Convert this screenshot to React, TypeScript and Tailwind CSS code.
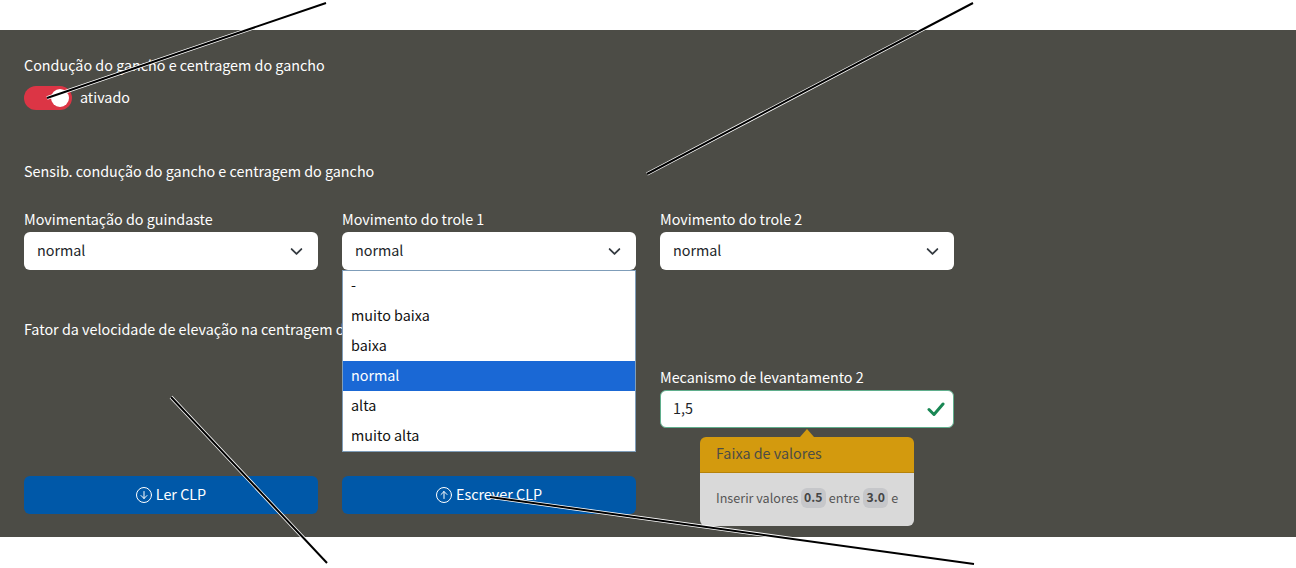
import React from "react";

const font = { fontFamily: '"Noto Sans CJK JP", "Noto Sans", sans-serif' };

function Chevron() {
  return (
    <svg width="13" height="13" viewBox="0 0 16 16" fill="none" stroke="#343a40" strokeWidth="2.2" strokeLinecap="round" strokeLinejoin="round">
      <path d="M2 5l6 6 6-6" />
    </svg>
  );
}

function Field({ label, open }: { label: string; open?: boolean }) {
  return (
    <div className="relative flex flex-col">
      <label className="h-[24px] leading-[22px] text-white">{label}</label>
      <div className="h-[38px] bg-white rounded-md flex items-center justify-between pl-[13px] pr-[15px] text-[#212529]">
        <span className="-mt-[2px]">normal</span>
        <Chevron />
      </div>
      {open && (
        <ul className="absolute top-[62px] left-0 right-0 h-[182px] bg-white border border-[#7f9db9] z-10 text-[#111]">
          {["-", "muito baixa", "baixa", "normal", "alta", "muito alta"].map((o) => (
            <li key={o} className={`h-[30px] leading-[28px] pl-[8px] ${o === "normal" ? "bg-[#1a68d5] text-white" : ""}`}>{o}</li>
          ))}
        </ul>
      )}
    </div>
  );
}

function Arrow({ up }: { up?: boolean }) {
  return (
    <svg width="16" height="16" viewBox="0 0 16 16" fill="none" stroke="white" strokeWidth="1" strokeLinecap="round" strokeLinejoin="round">
      <circle cx="8" cy="8" r="7.5" />
      {up ? <path d="M8 11.5V4.5M5 7.5l3-3 3 3" /> : <path d="M8 4.5v7M5 8.5l3 3 3-3" />}
    </svg>
  );
}

function Line({ x1, y1, x2, y2 }: { x1: number; y1: number; x2: number; y2: number }) {
  return (
    <>
      <line x1={x1} y1={y1} x2={x2} y2={y2} stroke="white" strokeWidth="3.6" />
      <line x1={x1} y1={y1} x2={x2} y2={y2} stroke="black" strokeWidth="2" />
    </>
  );
}

export default function App() {
  return (
    <div className="relative w-[1296px] h-[568px] bg-white overflow-hidden pt-[30px] text-[14.35px]" style={font}>
      <div className="h-[507px] bg-[#4c4c46] px-6 pt-6">
        <div className="h-[24px] leading-[22px] text-white">Condução do gancho e centragem do gancho</div>
        <div className="flex items-center gap-2 h-[24px] mt-[8px] text-white">
          <div className="w-[48px] h-[24px] rounded-full bg-[#dc3545] flex items-center justify-end pr-[3px]">
            <div className="w-[18px] h-[18px] rounded-full bg-white" />
          </div>
          <span className="-mt-[2px]">ativado</span>
        </div>

        <div className="h-[24px] leading-[22px] text-white mt-[50px]">Sensib. condução do gancho e centragem do gancho</div>

        <div className="grid grid-cols-[294px_294px_294px] gap-x-6 mt-[24px]">
          <Field label="Movimentação do guindaste" />
          <Field label="Movimento do trole 1" open />
          <Field label="Movimento do trole 2" />
        </div>

        <div className="h-[24px] leading-[22px] text-white mt-[48px]">Fator da velocidade de elevação na centragem do gancho</div>

        <div className="grid grid-cols-[294px_294px_294px] gap-x-6 mt-[24px]">
          <div className="col-start-3 relative flex flex-col">
            <label className="h-[24px] leading-[22px] text-white">Mecanismo de levantamento 2</label>
            <div className="h-[38px] bg-white rounded-md border border-[#5fae8c] flex items-center justify-between pl-[12px] pr-[8px] text-[#212529]">
              <span className="-mt-[2px]">1,5</span>
              <svg width="18" height="16" viewBox="0 0 18 16" fill="none" stroke="#198754" strokeWidth="3" strokeLinecap="round" strokeLinejoin="round">
                <path d="M2 8.5l5 5L16 3" />
              </svg>
            </div>
            <div className="absolute left-[40px] top-[71px] w-[214px] z-10">
              <div className="absolute -top-[8px] left-[100px] w-0 h-0 border-x-[7px] border-x-transparent border-b-[8px] border-b-[#d39a0e]" />
              <div className="h-[36px] bg-[#d39a0e] rounded-t-md border-b border-[#b5820a] pl-4 leading-[32px] text-[#4c4c46]">Faixa de valores</div>
              <div className="h-[53px] bg-[#d9d9d9] rounded-b-md flex items-center pl-4 pb-[3px] text-[12.6px] text-[#555] whitespace-nowrap">
                Inserir valores
                <b className="ml-[2px] mr-[3px] px-[3.5px] h-[20px] leading-[19px] rounded-md bg-[#c6c7ca] font-bold text-[12.2px] text-[#444]">0.5</b>
                entre
                <b className="mx-[3px] px-[3.5px] h-[20px] leading-[19px] rounded-md bg-[#c6c7ca] font-bold text-[12.2px] text-[#444]">3.0</b>
                e
              </div>
            </div>
          </div>
        </div>

        <div className="grid grid-cols-[294px_294px_294px] gap-x-6 mt-[48px]">
          <button className="h-[38px] rounded-md bg-[#0058a8] text-white flex items-center justify-center gap-1">
            <Arrow />
            <span className="-mt-[2px]">Ler CLP</span>
          </button>
          <button className="h-[38px] rounded-md bg-[#0058a8] text-white flex items-center justify-center gap-1">
            <Arrow up />
            <span className="-mt-[2px]">Escrever CLP</span>
          </button>
        </div>
      </div>

      <svg className="absolute inset-0 z-20 pointer-events-none" width="1296" height="568">
        <Line x1={326} y1={3} x2={47} y2={98} />
        <Line x1={973} y1={3} x2={647} y2={174} />
        <Line x1={171} y1={397} x2={327} y2={563} />
        <Line x1={974} y1={564} x2={490} y2={497} />
      </svg>
    </div>
  );
}
